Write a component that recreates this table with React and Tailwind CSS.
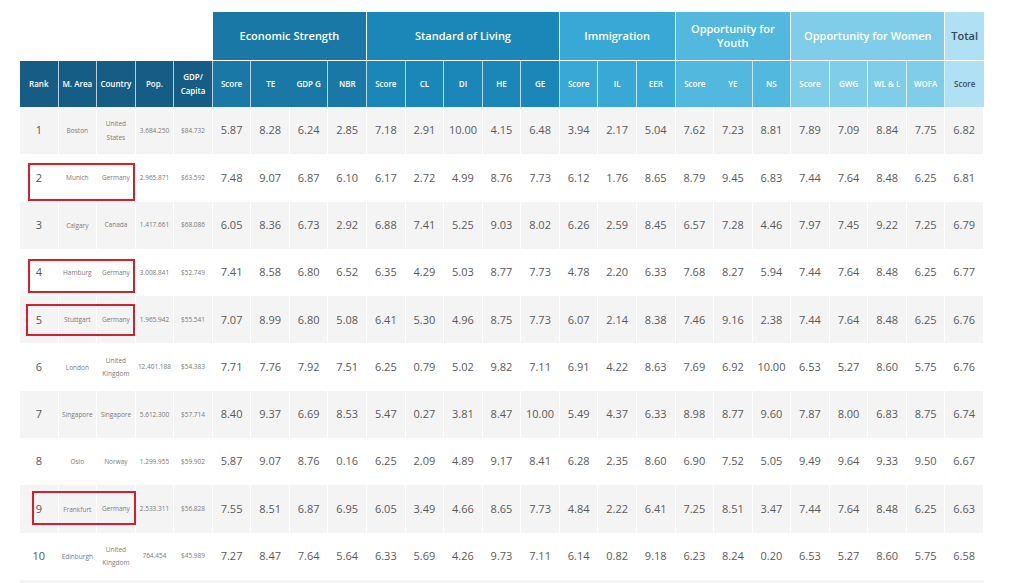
import React from "react";

const groups = [
  { name: "Economic Strength", span: "col-span-4", bg: "bg-[#1a78a7]", cols: ["Score", "TE", "GDP G", "NBR"], lines: [true, false, true, true] },
  { name: "Standard of Living", span: "col-span-5", bg: "bg-[#1b87b8]", cols: ["Score", "CL", "DI", "HE", "GE"], lines: [true, true, true, true, true] },
  { name: "Immigration", span: "col-span-3", bg: "bg-[#38a8d6]", cols: ["Score", "IL", "EER"], lines: [true, true, true] },
  { name: "Opportunity for Youth", span: "col-span-3", bg: "bg-[#52b8de]", cols: ["Score", "YE", "NS"], lines: [false, true, true] },
  { name: "Opportunity for Women", span: "col-span-4", bg: "bg-[#7fcde9]", cols: ["Score", "GWG", "WL & L", "WOFA"], lines: [true, true, true, true] },
];

const rows = [
  ["1", "Boston", "United States", "3.684.250", "$84.732", "5.87 8.28 6.24 2.85 7.18 2.91 10.00 4.15 6.48 3.94 2.17 5.04 7.62 7.23 8.81 7.89 7.09 8.84 7.75 6.82"],
  ["2", "Munich", "Germany", "2.965.871", "$63.592", "7.48 9.07 6.87 6.10 6.17 2.72 4.99 8.76 7.73 6.12 1.76 8.65 8.79 9.45 6.83 7.44 7.64 8.48 6.25 6.81"],
  ["3", "Calgary", "Canada", "1.417.661", "$68.086", "6.05 8.36 6.73 2.92 6.88 7.41 5.25 9.03 8.02 6.26 2.59 8.45 6.57 7.28 4.46 7.97 7.45 9.22 7.25 6.79"],
  ["4", "Hamburg", "Germany", "3.008.841", "$52.749", "7.41 8.58 6.80 6.52 6.35 4.29 5.03 8.77 7.73 4.78 2.20 6.33 7.68 8.27 5.94 7.44 7.64 8.48 6.25 6.77"],
  ["5", "Stuttgart", "Germany", "1.965.942", "$55.541", "7.07 8.99 6.80 5.08 6.41 5.30 4.96 8.75 7.73 6.07 2.14 8.38 7.46 9.16 2.38 7.44 7.64 8.48 6.25 6.76"],
  ["6", "London", "United Kingdom", "12.401.188", "$54.383", "7.71 7.76 7.92 7.51 6.25 0.79 5.02 9.82 7.11 6.91 4.22 8.63 7.69 6.92 10.00 6.53 5.27 8.60 5.75 6.76"],
  ["7", "Singapore", "Singapore", "5.612.300", "$57.714", "8.40 9.37 6.69 8.53 5.47 0.27 3.81 8.47 10.00 5.49 4.37 6.33 8.98 8.77 9.60 7.87 8.00 6.83 8.75 6.74"],
  ["8", "Oslo", "Norway", "1.299.955", "$59.902", "5.87 9.07 8.76 0.16 6.25 2.09 4.89 9.17 8.41 6.28 2.35 8.60 6.90 7.52 5.05 9.49 9.64 9.33 9.50 6.67"],
  ["9", "Frankfurt", "Germany", "2.533.311", "$56.828", "7.55 8.51 6.87 6.95 6.05 3.49 4.66 8.65 7.73 4.84 2.22 6.41 7.25 8.51 3.47 7.44 7.64 8.48 6.25 6.63"],
  ["10", "Edinburgh", "United Kingdom", "764.454", "$45.989", "7.27 8.47 7.64 5.64 6.33 5.69 4.26 9.73 7.11 6.14 0.82 9.18 6.23 8.24 0.20 6.53 5.27 8.60 5.75 6.58"],
];

const boxes = [
  "left-[28px] top-[163px] w-[107px] h-[38px]",
  "left-[28px] top-[259px] w-[107px] h-[34px]",
  "left-[26px] top-[304px] w-[109px] h-[32px]",
  "left-[32px] top-[491px] w-[104px] h-[34px]",
];

const grid = "grid grid-cols-[repeat(25,minmax(0,1fr))] w-[964px]";

function Row({ r, i }) {
  const grey = i % 2 === 0;
  const nums = r[5].split(" ");
  const cell = "flex items-center justify-center text-center border-r border-white h-full";
  return (
    <div className={`${grid} h-[47.3px] ${grey ? "bg-[#f4f4f4]" : "bg-white"}`}>
      <div className={`${cell} text-[11px] text-[#555]`}>{r[0]}</div>
      <div className={`${cell} text-[6.5px] text-[#7a7a7a] leading-[13px] px-px`}>{r[1]}</div>
      <div className={`${cell} text-[6.5px] text-[#7a7a7a] leading-[13.5px] px-px`}>{r[2]}</div>
      <div className={`${cell} text-[6.5px] text-[#7a7a7a] px-px`}>{r[3]}</div>
      <div className={`${cell} text-[6.5px] text-[#7a7a7a] px-px`}>{r[4]}</div>
      {nums.map((n, k) => (
        <div key={k} className={`${cell} text-[11px] text-[#5a5a5a]`}>{n}</div>
      ))}
    </div>
  );
}

export default function App() {
  return (
    <div className="relative w-[1024px] h-[583px] overflow-hidden bg-white pt-[12px] pl-[20px]" style={{ fontFamily: '"Open Sans", "Noto Sans", sans-serif' }}>
      {/* group header row */}
      <div className={`${grid} h-[48px]`}>
        <div className="col-span-5" />
        {groups.map((g) => (
          <div key={g.name} className={`${g.span} ${g.bg} border-r border-white flex items-center justify-center text-center text-white text-[11px] font-semibold leading-[14px] px-1`}>
            {g.name}
          </div>
        ))}
        <div className="bg-[#b0e0f3] flex items-center justify-center text-[11px] font-semibold text-[#34495a]">Total</div>
      </div>
      {/* column header row */}
      <div className={`${grid} h-[47px] border-t border-white/40`}>
        {["Rank", "M. Area", "Country", "Pop."].map((t) => (
          <div key={t} className="bg-[#165d85] border-r border-white/70 flex items-center justify-center text-white text-[8px] font-semibold">{t}</div>
        ))}
        <div className="bg-[#165d85] border-r border-white/70 flex items-center justify-center text-center text-white text-[8px] font-semibold leading-[14px]">GDP/<br />Capita</div>
        {groups.map((g) =>
          g.cols.map((c, k) => (
            <div key={g.name + c} className={`${g.bg} ${g.lines[k] ? "border-r border-white/70" : ""} flex items-center justify-center text-white text-[8px] font-semibold whitespace-nowrap`}>{c}</div>
          ))
        )}
        <div className="bg-[#b0e0f3] flex items-center justify-center text-[8px] font-semibold text-[#3d5060]">Score</div>
      </div>
      {rows.map((r, i) => (
        <Row key={i} r={r} i={i} />
      ))}
      <div className={`${grid} h-[47px] bg-[#f4f4f4]`} />
      {boxes.map((b, i) => (
        <div key={i} className={`absolute ${b} border-2 border-[#d2202f]`} />
      ))}
    </div>
  );
}
